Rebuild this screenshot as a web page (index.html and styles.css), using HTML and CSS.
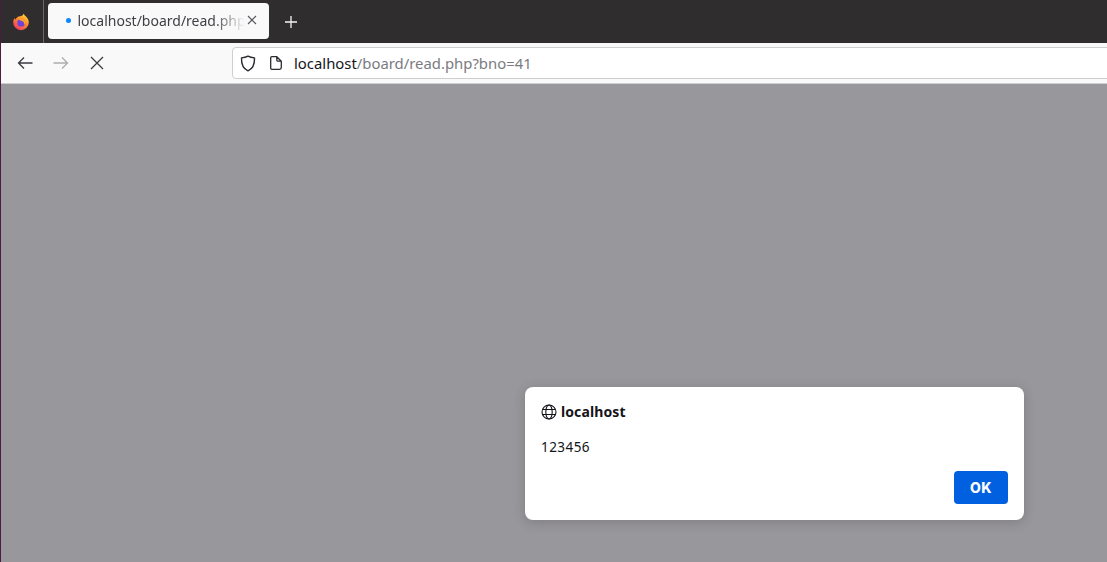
FILE: index.html
```html
<!DOCTYPE html>
<html lang="en">
<head>
<meta charset="utf-8">
<title>localhost/board/read.php</title>
<link rel="stylesheet" href="styles.css">
</head>
<body>
<div class="window">
  <div class="tabbar">
    <div class="app-btn">
      <svg width="18" height="18" viewBox="0 0 18 18" aria-hidden="true">
        <defs>
          <linearGradient id="fx" x1="0.8" y1="0" x2="0.2" y2="1">
            <stop offset="0" stop-color="#ffdc3a"/>
            <stop offset="0.45" stop-color="#ff8a2a"/>
            <stop offset="1" stop-color="#f0356a"/>
          </linearGradient>
        </defs>
        <path d="M11.500.6c.6 1.700 2 2.200 3.200 3.600 1.400 1.500 2.100 3.200 2.100 5A7.800 7.800 0 0 1 9 17.200a7.800 7.800 0 0 1-7.800-8c0-1.600.5-3 1.300-4.200.1.700.4 1.200.9 1.500C4.300 4.700 6 3.300 8 3.300 9.600 3.300 11.300 2.500 11.500.6z" fill="url(#fx)"/>
        <circle cx="9.200" cy="9.700" r="3.900" fill="#7142d6"/>
        <path d="M6 6.300c2-1.500 5.500-1.300 6.900 1.300.9 1.800.2 3.700-1.100 4.600.6-1.300.4-2.800-.8-3.700C9.800 7.600 7.800 7.600 6 6.300z" fill="#ffa02e"/>
      </svg>
    </div>
    <div class="tab">
      <span class="tab-dot"></span>
      <span class="tab-title">localhost/board/read.php</span>
      <svg class="tab-close" width="10" height="10" viewBox="0 0 10 10" aria-hidden="true"><path d="M1 1l8 8M9 1l-8 8" stroke="#55555a" stroke-width="1.100" fill="none"/></svg>
    </div>
    <svg class="new-tab" width="12" height="12" viewBox="0 0 12 12" aria-hidden="true"><path d="M6 0v12M0 6h12" stroke="#f5f5f5" stroke-width="1.300" fill="none"/></svg>
  </div>
  <div class="toolbar">
    <svg class="nav-icon" width="16" height="14" viewBox="0 0 16 14" aria-hidden="true"><path d="M15.500 7H1.500M7 1.500L1.500 7 7 12.500" stroke="#3b3b40" stroke-width="1.300" fill="none"/></svg>
    <svg class="nav-icon nav-forward" width="16" height="14" viewBox="0 0 16 14" aria-hidden="true"><path d="M.5 7h14M9 1.500L14.500 7 9 12.500" stroke="#adadb0" stroke-width="1.300" fill="none"/></svg>
    <svg class="nav-icon nav-stop" width="14" height="14" viewBox="0 0 14 14" aria-hidden="true"><path d="M1 1l12 12M13 1L1 13" stroke="#3b3b40" stroke-width="1.300" fill="none"/></svg>
    <div class="urlbar">
      <svg width="16" height="17" viewBox="0 0 16 17" aria-hidden="true"><path d="M8 1.200c1.800 1 3.800 1.500 6.500 1.700.2 5.800-1.600 10.700-6.500 12.900C3.100 13.600 1.300 8.700 1.500 2.900 4.200 2.700 6.200 2.200 8 1.200z" stroke="#2b2b30" stroke-width="1.400" fill="none" stroke-linejoin="round"/></svg>
      <svg class="page-icon" width="12" height="14" viewBox="0 0 12 14" aria-hidden="true"><path d="M1.800.7h5l4.500 4.500v6.300a1.800 1.800 0 0 1-1.800 1.800H1.800A1.100 1.100 0 0 1 .7 12.200V1.800A1.100 1.100 0 0 1 1.800.7zM6.800.7v3.200a1.300 1.300 0 0 0 1.300 1.300h3.200" stroke="#2b2b30" stroke-width="1.300" fill="none" stroke-linejoin="round"/></svg>
      <span class="url"><span class="url-host">localhost</span>/board/read.php?bno=41</span>
    </div>
  </div>
  <main class="content">
    <div class="dialog" role="alertdialog">
      <div class="dialog-head">
        <svg width="16" height="16" viewBox="0 0 16 16" aria-hidden="true"><g stroke="#15141a" stroke-width="1.100" fill="none"><circle cx="8" cy="8" r="7"/><ellipse cx="8" cy="8" rx="3.200" ry="7"/><path d="M1.500 5.500h13M1.500 10.500h13"/></g></svg>
        <span class="dialog-title">localhost</span>
      </div>
      <p class="dialog-msg">123456</p>
      <div class="dialog-actions"><button class="ok" type="button">OK</button></div>
    </div>
  </main>
</div>
</body>
</html>
```
FILE: styles.css
```css
html, body {
  margin: 0;
  height: 100%;
  overflow: hidden;
}
body {
  font-family: "Noto Sans", "Open Sans", sans-serif;
  background: #98979b;
}
.window {
  display: flex;
  flex-direction: column;
  height: 562px;
  border-left: 1px solid #4a1c3e;
  box-sizing: border-box;
}
.tabbar {
  height: 43px;
  background: #2f2d2d;
  display: flex;
  align-items: center;
  flex: none;
}
.app-btn {
  width: 43px;
  height: 43px;
  box-sizing: border-box;
  border-right: 1px solid #6a6868;
  display: flex;
  align-items: center;
  justify-content: center;
  padding-right: 2px;
}
.tab {
  margin-left: 4px;
  width: 221px;
  height: 36px;
  margin-top: -1px;
  padding-bottom: 2px;
  background: #f9f9fa;
  border-radius: 4px;
  display: flex;
  align-items: center;
  box-sizing: border-box;
  padding-left: 18px;
  color: #3f3f44;
}
.tab-dot {
  width: 5px;
  height: 5px;
  border-radius: 50%;
  background: #0a84ff;
  flex: none;
}
.tab-title {
  margin-left: 6.500px;
  width: 166.500px;
  flex: none;
  overflow: hidden;
  white-space: nowrap;
  font-size: 14px;
  -webkit-mask-image: linear-gradient(to right, #000 135px, transparent 167px);
  mask-image: linear-gradient(to right, #000 135px, transparent 167px);
}
.tab-close {
  margin-left: 3px;
  flex: none;
}
.new-tab {
  margin-left: 16px;
}
.toolbar {
  height: 41px;
  background: #f9f9fa;
  border-bottom: 1px solid #cfcfd3;
  box-sizing: border-box;
  display: flex;
  align-items: center;
  padding-left: 16px;
  flex: none;
}
.nav-forward {
  margin-left: 20px;
}
.nav-stop {
  margin-left: 21px;
}
.urlbar {
  margin-left: 128px;
  flex: 1;
  height: 32px;
  margin-right: -10px;
  background: #fff;
  border: 1px solid #cfcfd3;
  border-radius: 4px;
  box-sizing: border-box;
  display: flex;
  align-items: center;
  padding-left: 7px;
  color: #7b7b7f;
  font-size: 14.870px;
}
.page-icon {
  margin-left: 14px;
}
.url {
  margin-left: 12px;
  white-space: nowrap;
}
.url-host {
  color: #15141a;
}
.content {
  flex: 1;
  position: relative;
  min-height: 0;
}
.dialog {
  position: absolute;
  left: 524px;
  top: 303px;
  width: 499px;
  height: 133px;
  box-sizing: border-box;
  padding: 16px;
  background: #fff;
  border-radius: 8px;
  box-shadow: 0 2px 12px rgba(40, 38, 45, 0.22);
  display: flex;
  flex-direction: column;
  color: #15141a;
}
.dialog-head {
  display: flex;
  align-items: center;
  gap: 4px;
}
.dialog-title {
  font-size: 14px;
  font-weight: 700;
  line-height: 17px;
  letter-spacing: 0.1px;
}
.dialog-msg {
  margin: 18px 0 0;
  font-size: 13.500px;
  line-height: 18px;
  letter-spacing: 0.45px;
}
.dialog-actions {
  margin-top: auto;
  display: flex;
  justify-content: flex-end;
}
.ok {
  width: 54px;
  height: 33px;
  border: 0;
  border-radius: 4px;
  background: #0060df;
  color: #fbfbfe;
  font: 800 14px Inter, "Noto Sans", sans-serif;
  letter-spacing: 0.3px;
}
```
